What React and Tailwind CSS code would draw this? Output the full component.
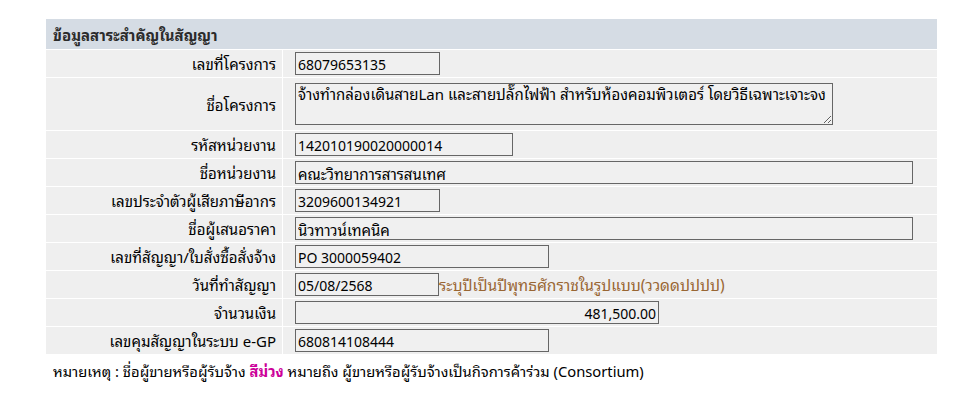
import React from 'react';

const font = { fontFamily: 'Tahoma, "Noto Sans Thai Looped", "Noto Sans Thai", "Liberation Sans", sans-serif' };

// thai: the value is Thai text and is set a size up to keep the glyph widths
const rows = [
  { label: 'เลขที่โครงการ', value: '68079653135', width: 'w-[145px]' },
  { label: 'ชื่อโครงการ', value: 'จ้างทำกล่องเดินสายLan และสายปลั๊กไฟฟ้า สำหรับห้องคอมพิวเตอร์ โดยวิธีเฉพาะเจาะจง', area: true },
  { label: 'รหัสหน่วยงาน', value: '142010190020000014', width: 'w-[218px]' },
  { label: 'ชื่อหน่วยงาน', value: 'คณะวิทยาการสารสนเทศ', width: 'w-[618px]', thai: true },
  { label: 'เลขประจำตัวผู้เสียภาษีอากร', value: '3209600134921', width: 'w-[145px]' },
  { label: 'ชื่อผู้เสนอราคา', value: 'นิวทาวน์เทคนิค', width: 'w-[618px]', thai: true },
  { label: 'เลขที่สัญญา/ใบสั่งซื้อสั่งจ้าง', value: 'PO 3000059402', width: 'w-[254px]' },
  { label: 'วันที่ทำสัญญา', value: '05/08/2568', width: 'w-[144px]', hint: 'ระบุปีเป็นปีพุทธศักราชในรูปแบบ(ววดดปปปป)' },
  { label: 'จำนวนเงิน', value: '481,500.00', width: 'w-[364px]', right: true },
  { label: 'เลขคุมสัญญาในระบบ e-GP', value: '680814108444', width: 'w-[254px]' },
];

function Field({ row }) {
  if (row.area) {
    return (
      <textarea
        readOnly
        value={row.value}
        className="h-[42px] w-[538px] resize border border-[#666] bg-[#f0f0f0] px-[2px] py-px text-[15px] leading-[17px] text-black outline-none"
        style={font}
      />
    );
  }
  return (
    <div className="flex items-center">
      <input
        readOnly
        value={row.value}
        className={`h-[23px] ${row.width} border border-[#666] bg-[#f0f0f0] px-[2px] text-black outline-none ${row.thai ? 'text-[15px]' : 'text-[14px]'} ${row.right ? 'text-right' : ''}`}
        style={font}
      />
      {row.hint && <span className="text-[15.5px] text-[#996633]">{row.hint}</span>}
    </div>
  );
}

export default function App() {
  return (
    <div className="min-h-[399px] bg-white pl-[46px] pt-[19px] text-[15px] text-[#222]" style={font}>
      <div className="flex w-[891px] flex-col gap-px">
        <div className="flex h-[30px] items-center bg-[#d5dce4] px-[7px] text-[15px] font-bold text-[#2b2b2b]">
          ข้อมูลสาระสำคัญในสัญญา
        </div>
        {rows.map((row) => (
          <div key={row.label} className="grid grid-cols-[236px_1fr] gap-px">
            <div className="flex items-center justify-end bg-[#efefef] pr-[6px] text-black">{row.label}</div>
            <div className={`flex items-center bg-[#efefef] pl-[12px] ${row.area ? 'h-[52px]' : 'h-[27px]'}`}>
              <Field row={row} />
            </div>
          </div>
        ))}
      </div>
      <p className="mt-[6px] pl-[7px] text-[14.75px] text-black">
        หมายเหตุ : ชื่อผู้ขายหรือผู้รับจ้าง <span className="font-bold text-[#cc0099]">สีม่วง</span> หมายถึง ผู้ขายหรือผู้รับจ้างเป็นกิจการค้าร่วม (Consortium)
      </p>
    </div>
  );
}
